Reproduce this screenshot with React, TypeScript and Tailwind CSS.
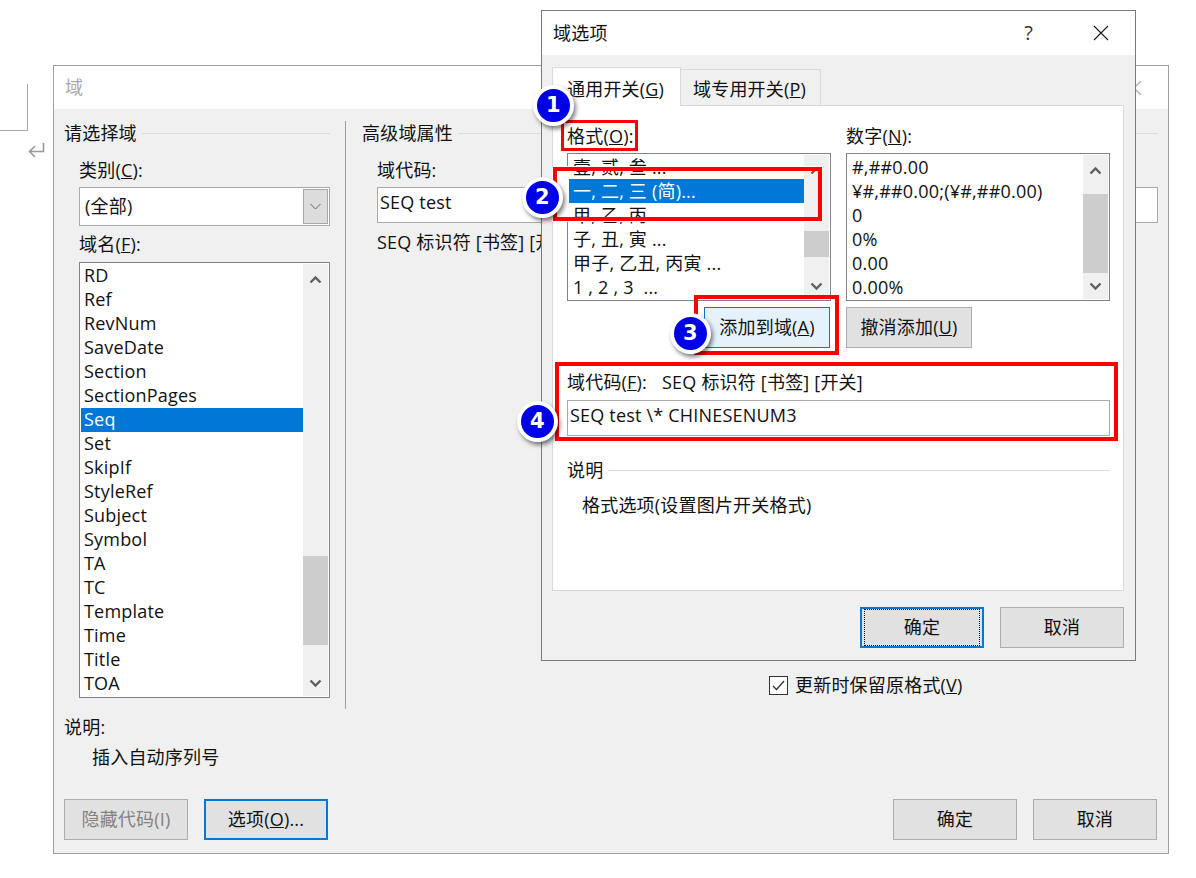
import React from "react";

const FONT = "font-['Open_Sans','Noto_Sans_CJK_SC',sans-serif]";

const FIELD_NAMES = [
  "RD", "Ref", "RevNum", "SaveDate", "Section", "SectionPages", "Seq", "Set", "SkipIf",
  "StyleRef", "Subject", "Symbol", "TA", "TC", "Template", "Time", "Title", "TOA",
];
const FORMATS = ["壹, 贰, 叁 ...", "一, 二, 三 (简)...", "甲, 乙, 丙 ...", "子, 丑, 寅 ...", "甲子, 乙丑, 丙寅 ...", "1 , 2 , 3  ..."];
const NUMBERS = ["#,##0.00", "¥#,##0.00;(¥#,##0.00)", "0", "0%", "0.00", "0.00%"];

const Chevron = ({ up = false }: { up?: boolean }) => (
  <svg width="13" height="9" viewBox="0 0 13 9" fill="none" stroke="#606060" strokeWidth={2.4}>
    <path d={up ? "M1.5 7.5 6.5 2.5 11.5 7.5" : "M1.5 1.5 6.5 6.5 11.5 1.5"} />
  </svg>
);

interface ListBoxProps {
  rows: string[];
  selected: number;
  thumb: string;
  rowText?: string;
  className: string;
}

const ListBox = ({ rows, selected, thumb, rowText = "pl-1 leading-6", className }: ListBoxProps) => (
  <div className={`flex overflow-hidden bg-white border border-[#82828c] py-px ${className}`}>
    <div className="flex-1 min-w-0 pl-px">
      {rows.map((row, i) => (
        <div
          key={row}
          className={`h-6 whitespace-pre ${rowText} ${i === selected ? "bg-[#0078d7] text-white" : ""}`}
        >
          {row}
        </div>
      ))}
    </div>
    <div className="w-[25px] mr-px bg-[#f0f0f0] flex flex-col">
      <div className="h-[30px] shrink-0 flex items-center justify-center">
        <Chevron up />
      </div>
      <div className={`shrink-0 bg-[#cdcdcd] ${thumb}`} />
      <div className="mt-auto h-[26px] shrink-0 flex items-center justify-center">
        <Chevron />
      </div>
    </div>
  </div>
);

const Btn = ({
  children,
  focus = false,
  disabled = false,
  dotted = false,
  className = "",
}: {
  children: React.ReactNode;
  focus?: boolean;
  disabled?: boolean;
  dotted?: boolean;
  className?: string;
}) => (
  <div
    className={`w-[124px] h-[41px] flex items-center justify-center bg-[#e1e1e1] ${
      focus ? "border-2 border-[#0078d7]" : "border border-[#adadad]"
    } ${disabled ? "text-[#838383]" : ""} ${className}`}
  >
    {dotted ? (
      <div className="w-full h-full m-[2px] flex items-center justify-center border border-dotted border-black">
        {children}
      </div>
    ) : (
      children
    )}
  </div>
);

const GroupTitle = ({ title }: { title: string }) => (
  <div className="h-6 flex items-center gap-[5px]">
    <span>{title}</span>
    <div className="flex-1 h-px bg-[#dcdcdc]" />
  </div>
);

const Badge = ({ n, className }: { n: number; className: string }) => (
  <div
    className={`absolute w-[41px] h-[41px] rounded-full bg-[#0000e6] border-[4px] border-white shadow-[2px_3px_4px_rgba(0,0,0,0.5)] flex items-center justify-center text-white text-[21px] font-bold font-['DejaVu_Sans',sans-serif] ${className}`}
  >
    {n}
  </div>
);

const CloseIcon = ({ color = "#1a1a1a" }: { color?: string }) => (
  <svg width="16" height="16" viewBox="0 0 16 16" fill="none" stroke={color} strokeWidth={1.1}>
    <path d="M1 1 15 15M15 1 1 15" />
  </svg>
);

const FieldDialog = () => (
  <div className="absolute left-[53px] top-[65px] w-[1116px] h-[789px] border border-[#a0a0a0] bg-[#f0f0f0] flex flex-col">
    <div className="h-[43px] shrink-0 bg-white pl-[11px] flex items-center text-[#a8a8a8]">
      <span>域</span>
      <div className="ml-auto mr-[26px] flex">
        <CloseIcon color="#a8a8a8" />
      </div>
    </div>
    <div className="flex-1 pl-[10px] pr-[10px] flex flex-col">
      <div className="mt-3 h-[588px] flex">
        <div className="w-[282px] shrink-0 border-r border-[#a0a0a0] pr-[15px]">
          <GroupTitle title="请选择域" />
          <div className="pl-[15px]">
            <div className="mt-[13px] h-6 leading-6">
              类别(<u>C</u>):
            </div>
            <div className="mt-[5px] h-[39px] bg-white border border-[#aaaaaa] flex items-center">
              <span className="pl-[5px]">(全部)</span>
              <div className="ml-auto mr-px w-[25px] h-[35px] bg-[#dcdcdc] border border-[#a8a8a8] flex items-center justify-center">
                <svg width="11" height="7" viewBox="0 0 11 7" fill="none" stroke="#666666" strokeWidth={1}>
                  <path d="M.5 1 5.5 6 10.5 1" />
                </svg>
              </div>
            </div>
            <div className="mt-[6px] h-6 leading-6">
              域名(<u>F</u>):
            </div>
            <ListBox
              rows={FIELD_NAMES}
              selected={6}
              thumb="mt-[262px] h-[89px]"
              rowText="pl-[3px] leading-[23px]"
              className="mt-[6px] h-[436px]"
            />
          </div>
        </div>
        <div className="flex-1 pl-4 flex flex-col">
          <GroupTitle title="高级域属性" />
          <div className="pl-[15px] flex flex-col flex-1">
            <div className="mt-[13px] h-6 leading-6">域代码:</div>
            <div className="mt-[5px] h-[36px] bg-white border border-[#aaaaaa] pl-[2px] leading-[28px]">SEQ test</div>
            <div className="mt-[7px] h-6 leading-6">SEQ 标识符 [书签] [开关]</div>
            <div className="mt-auto mb-3 ml-[392px] h-6 flex items-center gap-[7px]">
              <div className="w-[19px] h-[19px] border border-[#333333] bg-white flex items-center justify-center">
                <svg width="13" height="11" viewBox="0 0 13 11" fill="none" stroke="#333333" strokeWidth={1.3}>
                  <path d="M1 6 4.5 9.5 12 1" />
                </svg>
              </div>
              <span>
                更新时保留原格式(<u>V</u>)
              </span>
            </div>
          </div>
        </div>
      </div>
      <div className="mt-[7px] h-6 leading-[23px]">说明:</div>
      <div className="mt-[6px] h-6 leading-[23px] pl-7">插入自动序列号</div>
      <div className="mt-[29px] pr-px flex gap-4">
        <Btn disabled>隐藏代码(I)</Btn>
        <Btn focus>
          <span>
            选项(<u>O</u>)...
          </span>
        </Btn>
        <Btn className="ml-auto">确定</Btn>
        <Btn>取消</Btn>
      </div>
    </div>
  </div>
);

const OptionsDialog = () => (
  <div className="absolute isolate left-[541px] top-[10px] w-[595px] h-[651px] border border-[#7a7a7a] bg-[#f0f0f0] flex flex-col">
    <div className="h-[44px] shrink-0 bg-white pl-[11px] flex items-center">
      <span>域选项</span>
      <span className="ml-auto mr-[60px] text-[20px] text-[#333333]">?</span>
      <div className="mr-[26px] flex">
        <CloseIcon />
      </div>
    </div>
    <div className="flex-1 pl-[10px] pr-[11px]">
      <div className="mt-3 h-[39px] flex items-end">
        <div className="w-[129px] h-[39px] bg-white border border-b-0 border-[#d9d9d9] relative z-10 pl-[14px] leading-[42px]">
          通用开关(<u>G</u>)
        </div>
        <div className="w-[140px] h-[37px] border border-l-0 border-[#d9d9d9] pl-[12px] leading-[38px]">
          域专用开关(<u>P</u>)
        </div>
      </div>
      <div className="-mt-px h-[486px] bg-white border border-[#d9d9d9] px-[14px]">
        <div className="mt-[18px] grid grid-cols-[264px_264px] gap-x-[15px]">
          <div className="h-6 leading-6">
            格式(<u>O</u>):
          </div>
          <div className="h-6 leading-6">
            数字(<u>N</u>):
          </div>
          <ListBox rows={FORMATS} selected={1} thumb="mt-[46px] h-[26px]" className="mt-[5px] h-[148px]" />
          <ListBox rows={NUMBERS} selected={-1} thumb="mt-[9px] h-[79px]" className="mt-[5px] h-[148px]" />
          <div className="mt-[6px] flex justify-end pr-px">
            <Btn className="!w-[126px] !bg-[#e5f1fb] !border-[#0078d7]">
              <span>
                添加到域(<u>A</u>)
              </span>
            </Btn>
          </div>
          <div className="mt-[6px]">
            <Btn className="!w-[126px]">
              <span>
                撤消添加(<u>U</u>)
              </span>
            </Btn>
          </div>
        </div>
        <div className="mt-[23px] h-6 leading-[23px] flex">
          <span>
            域代码(<u>F</u>):
          </span>
          <span className="ml-[15px]">SEQ 标识符 [书签] [开关]</span>
        </div>
        <div className="mt-[5px] w-[543px] h-[36px] border border-[#aaaaaa] pl-[2px] leading-[28px]">
          SEQ test \* CHINESENUM3
        </div>
        <div className="mt-[22px] w-[543px]">
          <GroupTitle title="说明" />
        </div>
        <div className="mt-3 h-6 leading-[23px] pl-[15px]">格式选项(设置图片开关格式)</div>
      </div>
      <div className="mt-4 flex justify-end gap-4">
        <Btn focus dotted>
          确定
        </Btn>
        <Btn>取消</Btn>
      </div>
    </div>
  </div>
);

// Red frames and numbered markers drawn over the screenshot.
const Annotations = () => (
  <>
    <div className="absolute left-[561px] top-[120px] w-[77px] h-[31px] border-[3px] border-[#ff0000]" />
    <div className="absolute left-[553px] top-[167px] w-[269px] h-[54px] border-[4px] border-[#ff0000] outline outline-1 outline-white">
      <div className="ml-[10px] w-px h-full bg-white" />
    </div>
    <div className="absolute left-[694px] top-[295px] w-[145px] h-[60px] border-[4px] border-[#ff0000]" />
    <div className="absolute left-[555px] top-[362px] w-[563px] h-[79px] border-[4px] border-[#ff0000]" />
    <Badge n={1} className="left-[533px] top-[85px]" />
    <Badge n={2} className="left-[522px] top-[177px]" />
    <Badge n={3} className="left-[670px] top-[313px]" />
    <Badge n={4} className="left-[517px] top-[401px]" />
  </>
);

export default function App() {
  return (
    <div className={`relative w-[1196px] h-[878px] overflow-hidden bg-white text-[18px] tracking-[0.2px] text-[#111111] ${FONT}`}>
      <div className="absolute left-0 top-[84px] w-[28px] h-[47px] border-r border-b border-[#a8a8a8]" />
      <svg className="absolute left-[28px] top-[143px]" width="17" height="15" viewBox="0 0 17 15" fill="none" stroke="#999999" strokeWidth={1.6}>
        <path d="M15.5 0v8.5H2M7 3 1.5 8.5 7 14" />
      </svg>
      <FieldDialog />
      <OptionsDialog />
      <Annotations />
    </div>
  );
}
